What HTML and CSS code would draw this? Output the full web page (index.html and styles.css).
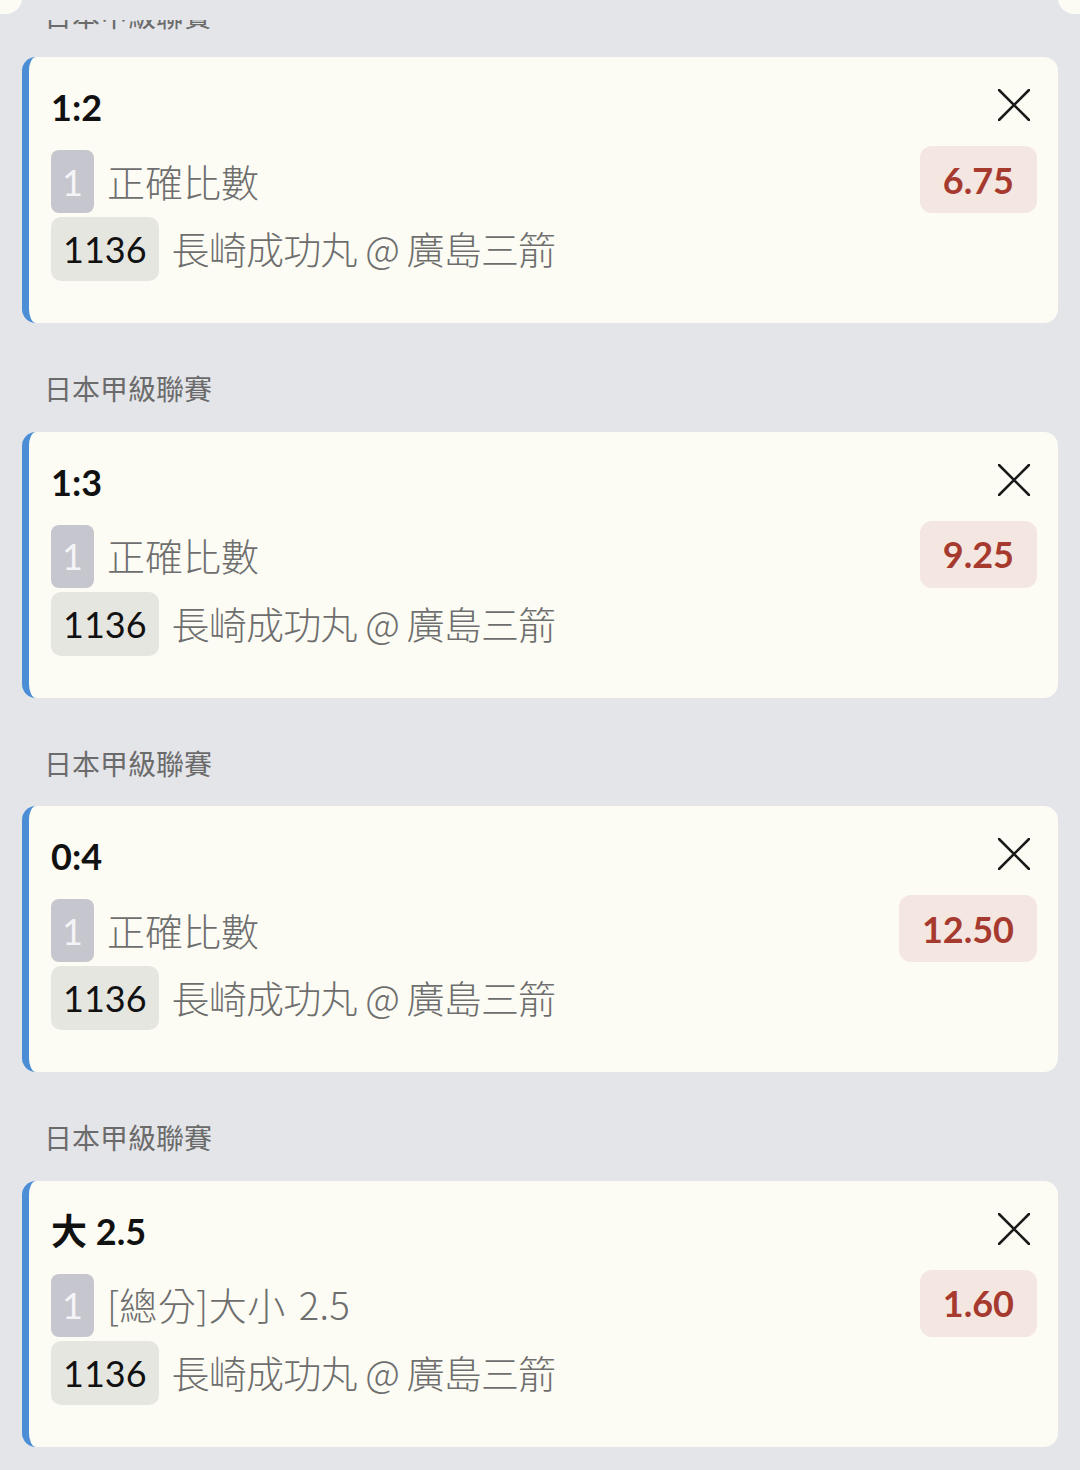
FILE: index.html
```html
<!DOCTYPE html>
<html lang="zh-Hant">
<head>
    <meta charset="UTF-8">
    <meta name="viewport" content="width=device-width, initial-scale=1.0">
    <title>投注單</title>
    <link rel="stylesheet" href="styles.css">
</head>
<body>
    <div class="page">
        <div class="peek">
            <div class="league">日本甲級聯賽</div>
            <div class="peek-cover"></div>
            <span class="corner corner-left"></span>
            <span class="corner corner-right"></span>
        </div>

        <div class="bet-card">
            <div class="bet-main">
                <div class="title">1:2</div>
                <div class="row">
                    <span class="pick-no">1</span>
                    <span class="market">正確比數</span>
                </div>
                <div class="row">
                    <span class="match-no">1136</span>
                    <span class="market teams">長崎成功丸 @ 廣島三箭</span>
                </div>
            </div>
            <div class="bet-side">
                <button class="close" aria-label="移除">
                    <svg viewBox="0 0 32 32" width="32" height="32"><path d="M1 1L31 31M31 1L1 31" /></svg>
                </button>
                <div class="odds">6.75</div>
            </div>
        </div>

        <div class="league">日本甲級聯賽</div>
        <div class="bet-card">
            <div class="bet-main">
                <div class="title">1:3</div>
                <div class="row">
                    <span class="pick-no">1</span>
                    <span class="market">正確比數</span>
                </div>
                <div class="row">
                    <span class="match-no">1136</span>
                    <span class="market teams">長崎成功丸 @ 廣島三箭</span>
                </div>
            </div>
            <div class="bet-side">
                <button class="close" aria-label="移除">
                    <svg viewBox="0 0 32 32" width="32" height="32"><path d="M1 1L31 31M31 1L1 31" /></svg>
                </button>
                <div class="odds">9.25</div>
            </div>
        </div>

        <div class="league">日本甲級聯賽</div>
        <div class="bet-card">
            <div class="bet-main">
                <div class="title">0:4</div>
                <div class="row">
                    <span class="pick-no">1</span>
                    <span class="market">正確比數</span>
                </div>
                <div class="row">
                    <span class="match-no">1136</span>
                    <span class="market teams">長崎成功丸 @ 廣島三箭</span>
                </div>
            </div>
            <div class="bet-side">
                <button class="close" aria-label="移除">
                    <svg viewBox="0 0 32 32" width="32" height="32"><path d="M1 1L31 31M31 1L1 31" /></svg>
                </button>
                <div class="odds">12.50</div>
            </div>
        </div>

        <div class="league">日本甲級聯賽</div>
        <div class="bet-card">
            <div class="bet-main">
                <div class="title">大 2.5</div>
                <div class="row">
                    <span class="pick-no">1</span>
                    <span class="market total">[總分]大小 2.5</span>
                </div>
                <div class="row">
                    <span class="match-no">1136</span>
                    <span class="market teams">長崎成功丸 @ 廣島三箭</span>
                </div>
            </div>
            <div class="bet-side">
                <button class="close" aria-label="移除">
                    <svg viewBox="0 0 32 32" width="32" height="32"><path d="M1 1L31 31M31 1L1 31" /></svg>
                </button>
                <div class="odds">1.60</div>
            </div>
        </div>
    </div>
</body>
</html>
```

FILE: styles.css
```css
body {
    margin: 0;
    padding: 0;
    background-color: #e4e5e9;
    font-family: Lato, "Noto Sans CJK TC", sans-serif;
    color: #111;
}

.page {
    padding: 0 22px;
}

/* section heading */
.league {
    padding: 45px 0 23.67px 22px;
    font-family: "Noto Sans CJK TC", sans-serif;
    font-size: 28px;
    line-height: 40px;
    color: #6b6b6b;
}

/* heading scrolled mostly under the top bar */
.peek {
    position: relative;
    height: 57px;
    margin: 0 -22px;
    overflow: hidden;
}

.peek .league {
    padding: 0 0 0 44px;
    margin-top: -5px;
}

.peek-cover {
    position: absolute;
    top: 0;
    left: 0;
    right: 0;
    height: 20px;
    background-color: #e4e5e9;
}

.corner {
    position: absolute;
    top: -10px;
    width: 22px;
    height: 24px;
    background-color: #fcfcf4;
}

.corner-left {
    left: 0;
    border-bottom-right-radius: 16px;
}

.corner-right {
    right: 0;
    border-bottom-left-radius: 16px;
}

/* bet card */
.bet-card {
    display: flex;
    background-color: #fcfcf4;
    border-left: 7px solid #4b8ed6;
    border-radius: 14px;
    padding: 24px 21px 42px 22px;
}

.bet-main {
    flex: 1;
}

.title {
    font-weight: 700;
    font-size: 36px;
    line-height: 52px;
    margin-bottom: 17px;
}

.row {
    display: flex;
    align-items: center;
    gap: 13px;
}

.row + .row {
    margin-top: 4px;
}

.pick-no {
    display: flex;
    align-items: center;
    justify-content: center;
    height: 63px;
    padding: 0 11px;
    background-color: #c6c6ce;
    border-radius: 8px;
    color: #f4f4f6;
    font-size: 36px;
}

.match-no {
    display: flex;
    align-items: center;
    height: 64px;
    padding: 0 12px;
    background-color: #e6e6e1;
    border-radius: 10px;
    font-size: 36px;
    color: #111;
}

.market {
    font-family: "Noto Sans CJK TC", sans-serif;
    font-weight: 300;
    font-size: 38px;
    color: #6e6e6e;
    margin-top: -3px;
}

.teams {
    letter-spacing: -0.8px;
}

.total {
    word-spacing: 4px;
    letter-spacing: 0.5px;
}

.bet-side {
    display: flex;
    flex-direction: column;
    align-items: flex-end;
}

.close {
    width: 32px;
    height: 32px;
    margin: 8px 7px 0 0;
    padding: 0;
    border: none;
    background: none;
    cursor: pointer;
}

.close svg {
    display: block;
    stroke: #1a1a1a;
    stroke-width: 2.6;
    stroke-linecap: round;
    fill: none;
}

.odds {
    display: flex;
    align-items: center;
    height: 67px;
    margin-top: 25px;
    padding: 0 23px;
    background-color: #f4e6e0;
    border-radius: 12px;
    color: #a63a2e;
    font-weight: 700;
    font-size: 36px;
}
```
